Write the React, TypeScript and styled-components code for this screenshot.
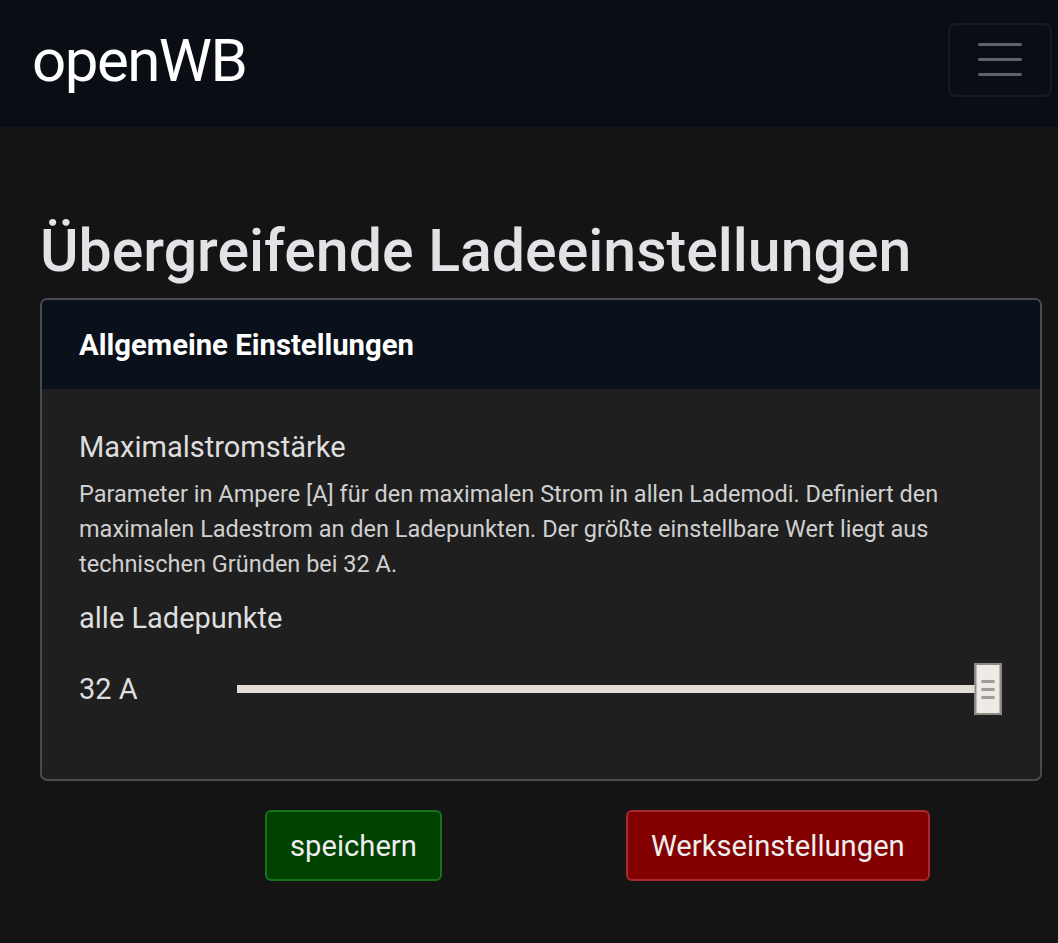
import React, { useState } from "react";
import styled, { createGlobalStyle } from "styled-components";

const GlobalStyle = createGlobalStyle`
  html, body {
    margin: 0;
    padding: 0;
    background: #141414;
  }
  body {
    font-family: Roboto, "Liberation Sans", sans-serif;
    color: #dee2e6;
  }
`;

export default function App() {
  const [current, setCurrent] = useState<number>(32);
  const min = 6;
  const max = 32;
  const pct = ((current - min) / (max - min)) * 100;

  return (
    <>
      <GlobalStyle />
      <Navbar>
        <Brand>openWB</Brand>
        <Toggler aria-label="Menü">
          <span />
          <span />
          <span />
        </Toggler>
      </Navbar>
      <Main>
        <Title>Übergreifende Ladeeinstellungen</Title>
        <Card>
          <CardHeader>Allgemeine Einstellungen</CardHeader>
          <CardBody>
            <SettingTitle>Maximalstromstärke</SettingTitle>
            <Help>
              Parameter in Ampere [A] für den maximalen Strom in allen
              Lademodi. Definiert den maximalen Ladestrom an den Ladepunkten.
              Der größte einstellbare Wert liegt aus technischen Gründen bei 32
              A.
            </Help>
            <SubLabel>alle Ladepunkte</SubLabel>
            <SliderRow>
              <Value>{current} A</Value>
              <Track>
                <Fill style={{ width: `${pct}%` }} />
                <Thumb
                  style={{ left: `${pct}%` }}
                  onClick={() => setCurrent(current === max ? min : max)}
                >
                  <i />
                  <i />
                  <i />
                </Thumb>
              </Track>
            </SliderRow>
          </CardBody>
        </Card>
        <Actions>
          <Button variant="save">speichern</Button>
          <Button variant="reset">Werkseinstellungen</Button>
        </Actions>
      </Main>
    </>
  );
}

const Navbar = styled.nav`
  height: 127px;
  background: #0a0e14;
  display: flex;
  align-items: center;
  justify-content: space-between;
  padding: 0 6px 0 32px;
  box-sizing: border-box;
`;

const Brand = styled.div`
  font-size: 60px;
  color: #ffffff;
  letter-spacing: -1.5px;
  line-height: 1;
  padding-bottom: 6px;
`;

const Toggler = styled.button`
  width: 104px;
  height: 74px;
  margin-top: -8px;
  background: transparent;
  border: 2px solid #161a20;
  border-radius: 8px;
  display: flex;
  flex-direction: column;
  align-items: center;
  justify-content: center;
  gap: 12px;
  padding: 0;
  & span {
    display: block;
    width: 44px;
    height: 3px;
    border-radius: 2px;
    background: #5f6266;
  }
`;

const Main = styled.main`
  padding: 88px 16px 40px 40px;
`;

const Title = styled.h1`
  margin: 0 0 12px;
  font-size: 59px;
  font-weight: 500;
  line-height: 71px;
  color: #e1e3e6;
`;

const Card = styled.section`
  border: 2px solid #474b52;
  border-radius: 7px;
  overflow: hidden;
  background: #1f1f1f;
`;

const CardHeader = styled.div`
  background: #0b111a;
  padding: 0 37px;
  height: 89px;
  display: flex;
  align-items: center;
  font-size: 29.3px;
  font-weight: 700;
  color: #ffffff;
`;

const CardBody = styled.div`
  padding: 40px 37px 64px;
`;

const SettingTitle = styled.div`
  font-size: 29px;
  color: #dedede;
  line-height: 36px;
`;

const Help = styled.p`
  margin: 12px 0 18px;
  font-size: 23.5px;
  line-height: 35px;
  color: #d0d0d0;
`;

const SubLabel = styled.div`
  font-size: 29px;
  color: #dedede;
  line-height: 36px;
`;

const SliderRow = styled.div`
  display: flex;
  align-items: center;
  margin-top: 27px;
  height: 52px;
`;

const Value = styled.div`
  width: 158px;
  font-size: 29px;
  color: #dedede;
`;

const Track = styled.div`
  position: relative;
  flex: 1;
  height: 8px;
  margin-right: 15px;
  background: #5a5854;
`;

const Fill = styled.div`
  height: 100%;
  background: #e2ded6;
`;

const Thumb = styled.div`
  position: absolute;
  top: 50%;
  transform: translate(-50%, -50%);
  width: 23px;
  height: 48px;
  background: #eeebe6;
  border: 2px solid #8e8a84;
  display: flex;
  flex-direction: column;
  align-items: center;
  justify-content: center;
  gap: 5px;
  cursor: pointer;
  & i {
    display: block;
    width: 13px;
    height: 3px;
    background: #a09c95;
  }
`;

const Actions = styled.div`
  display: flex;
  padding: 29px 0 0 225px;
  gap: 184px;
`;

const Button = styled.button<{ variant: "save" | "reset" }>`
  font-family: Roboto, "Liberation Sans", sans-serif;
  font-size: 29.2px;
  color: #eeeeee;
  height: 71px;
  padding: 0 23px;
  border-radius: 6px;
  cursor: pointer;
  background: ${(p) => (p.variant === "save" ? "#004200" : "#820000")};
  border: 2px solid ${(p) => (p.variant === "save" ? "#17731a" : "#a82a2e")};
`;
